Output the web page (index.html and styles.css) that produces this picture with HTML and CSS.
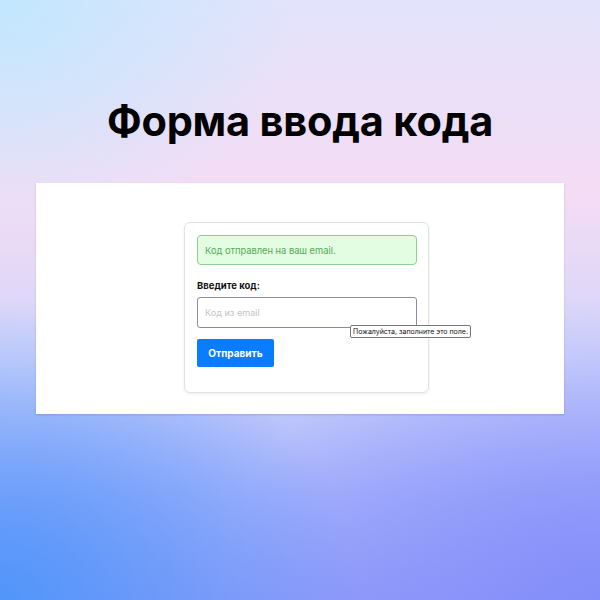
FILE: index.html
```html
<!DOCTYPE html>
<html lang="ru">
<head>
<meta charset="utf-8">
<link rel="stylesheet" href="styles.css">
</head>
<body>
<div class="page">
  <h1 class="title">Форма ввода кода</h1>
  <div class="panel">
    <div class="card">
      <div class="alert">Код отправлен на ваш email.</div>
      <label class="label">Введите код:</label>
      <div class="field">
        <div class="input">Код из email</div>
        <div class="tooltip">Пожалуйста, заполните это поле.</div>
      </div>
      <button class="btn">Отправить</button>
    </div>
  </div>
</div>
</body>
</html>
```
FILE: styles.css
```css
html, body {
  margin: 0;
  padding: 0;
}
body {
  width: 600px;
  height: 600px;
  overflow: hidden;
  font-family: Inter, "Noto Sans", sans-serif;
  background:
    radial-gradient(ellipse 300px 240px at 0% 0%, rgba(192,232,255,0.95), rgba(192,232,255,0) 100%),
    radial-gradient(ellipse 360px 300px at 0% 100%, rgba(80,150,250,1), rgba(80,150,250,0) 100%),
    radial-gradient(ellipse 380px 300px at 100% 100%, rgba(130,140,250,0.9), rgba(130,140,250,0) 100%),
    linear-gradient(180deg, #e2e3fb 0%, #f4dcf4 33%, #d0d4fb 60%, #a6b2fb 82%, #939df9 100%);
}
.page {
  display: flex;
  flex-direction: column;
  align-items: center;
}
.title {
  margin: 97px 0 0;
  height: 86px;
  font-size: 41.5px;
  font-weight: 700;
  letter-spacing: -0.2px;
  color: #000;
  line-height: 48px;
}
.panel {
  width: 528px;
  height: 231px;
  background: #fff;
  box-shadow: 0 1px 2px rgba(80,80,140,0.25);
  display: flex;
  flex-direction: column;
  align-items: flex-start;
  padding: 39px 0 0 148px;
  box-sizing: border-box;
}
.card {
  width: 245px;
  height: 171px;
  box-sizing: border-box;
  border: 1px solid #e2e2e6;
  border-radius: 6px;
  box-shadow: 0 1px 3px rgba(0,0,0,0.08);
  padding: 12px 12px 0;
  display: flex;
  flex-direction: column;
  align-items: flex-start;
}
.alert {
  width: 220px;
  height: 30px;
  box-sizing: border-box;
  background: #e3fde3;
  border: 1px solid #8fcf8f;
  border-radius: 4px;
  color: #55a855;
  font-size: 9.3px;
  padding-left: 7px;
  display: flex;
  align-items: center;
}
.label {
  margin-top: 14px;
  font-size: 9.5px;
  font-weight: 700;
  color: #111;
  line-height: 14px;
}
.field {
  position: relative;
  margin-top: 4px;
}
.input {
  width: 220px;
  height: 31px;
  box-sizing: border-box;
  border: 1px solid #8c8ca0;
  border-radius: 3px;
  color: #c4c4c8;
  font-size: 9.1px;
  padding-left: 7px;
  display: flex;
  align-items: center;
}
.tooltip {
  position: absolute;
  left: 153px;
  top: 28px;
  white-space: nowrap;
  background: #fff;
  border: 1px solid #777;
  border-radius: 2px;
  font-size: 7px;
  color: #111;
  padding: 1px 2px;
  line-height: 9px;
}
.btn {
  margin-top: 11px;
  width: 77px;
  height: 28px;
  border: none;
  border-radius: 2px;
  background: #0a7cff;
  color: #fff;
  font-family: Inter, "Noto Sans", sans-serif;
  font-size: 10px;
  font-weight: 700;
  padding: 0;
}
```
